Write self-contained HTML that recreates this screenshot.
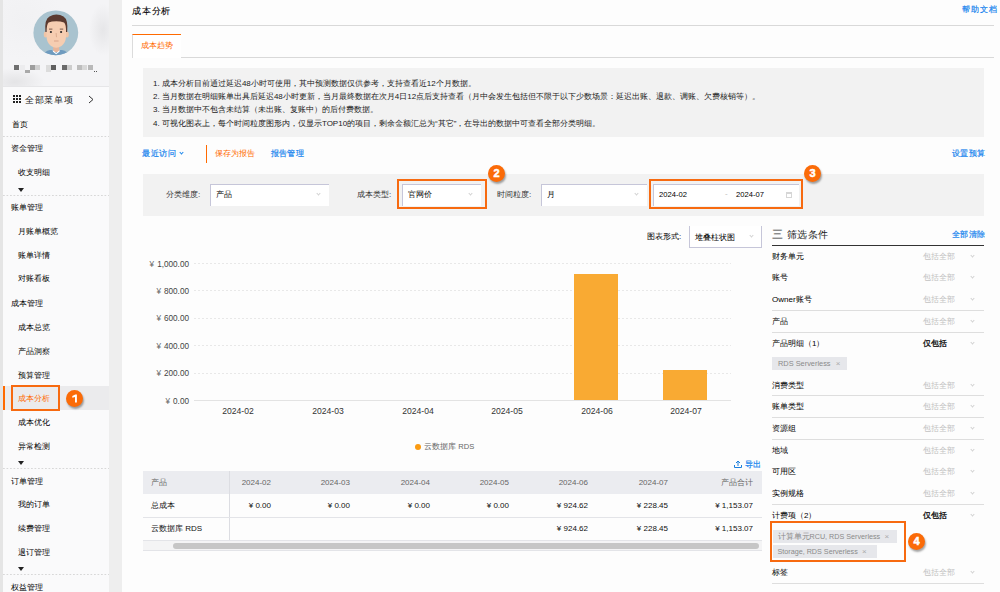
<!DOCTYPE html>
<html><head><meta charset="utf-8">
<style>
*{box-sizing:border-box;margin:0;padding:0}
html,body{width:1000px;height:592px;overflow:hidden;background:#fdfdfd;font-family:"Liberation Sans",sans-serif;color:#333}
.a{position:absolute;white-space:nowrap}
svg{display:block}
.t8{font-size:8px;line-height:10px;color:#000}
.blue{color:#1784ee;-webkit-text-stroke:.2px #1784ee}
.org{color:#ff6a00;-webkit-text-stroke:0 transparent !important}
.side{position:absolute;left:3px;top:0;width:106px;height:592px;background:#fafafb}
.sidehead{position:absolute;left:3px;top:0;width:106px;height:86px;background:radial-gradient(ellipse 14px 26px at 100px 30px,#e6e6e8,rgba(240,240,242,0)),radial-gradient(ellipse 30px 14px at 12px 82px,#e4e4e6,rgba(240,240,242,0)),radial-gradient(ellipse 40px 40px at 20px 20px,#f1f1f3,rgba(240,240,242,0)),#f4f4f6}
.strip{position:absolute;left:109px;top:0;width:13px;height:592px;background:#eeeeee}
.lstrip{position:absolute;left:0;top:0;width:3px;height:592px;background:#e5e5e5}
.dash{position:absolute;left:3px;width:106px;height:1px;background:linear-gradient(90deg,#d8d8d8 0 2px,transparent 2px 3.5px);background-size:3.5px 1px}
.tri{position:absolute;width:0;height:0;border-left:3.5px solid transparent;border-right:3.5px solid transparent;border-top:4px solid #222}
.badge{position:absolute;width:17px;height:17px;border-radius:50%;background:#fb6b08;color:#fff;font-weight:bold;font-size:11px;line-height:17px;text-align:center;box-shadow:1px 2px 2px rgba(0,0,0,.35);-webkit-text-stroke:.5px #fff}
.hl{position:absolute;border:2px solid #f76a10}
.sel{position:absolute;background:#fff;border-top:1px solid #c6c6d9;border-left:1px solid #c6c6d9}
.chev{position:absolute;width:3px;height:3px;border-right:1px solid #d2d2d2;border-bottom:1px solid #d2d2d2;transform:rotate(45deg)}
.grid{position:absolute;left:194px;width:537px;height:1px;background:linear-gradient(90deg,#e8e8e8 0 2px,transparent 2px 4px);background-size:4px 1px}
.ylab{position:absolute;width:60px;left:129px;text-align:right;font-size:8.2px;line-height:10px;color:#444}
.ylab i{font-style:normal;color:#666;margin-right:3px}
.xlab{position:absolute;width:60px;text-align:center;font-size:8.6px;line-height:10px;color:#333}
.bar{position:absolute;background:#f9aa33}
.frow{position:absolute;left:772px;font-size:8px;line-height:10px;color:#000}
.fval{position:absolute;left:923px;font-size:8px;line-height:10px;color:#c2c2c2}
.fline{position:absolute;left:772px;width:212px;height:1px;background:#dedede}
.tag{position:absolute;white-space:nowrap;overflow:hidden;background:#e6e7eb;color:#8a8a8a;font-size:8px;line-height:13px;height:13px;padding-left:5px}
.th{position:absolute;font-size:8px;line-height:10px;color:#666}
.td{position:absolute;font-size:8px;line-height:10px;color:#111}
</style></head><body>

<!-- sidebar -->
<div class="lstrip"></div>
<div class="side"></div>
<div class="sidehead"></div>
<div class="strip"></div>
<div style="position:absolute;left:3px;top:86px;width:106px;height:1px;background:#e6e6e8"></div>

<!-- avatar -->
<svg class="a" style="left:33px;top:10px" width="46" height="46" viewBox="0 0 46 46">
<defs><clipPath id="cc"><circle cx="22.8" cy="22.8" r="22.4"/></clipPath></defs>
<circle cx="22.8" cy="22.8" r="22.4" fill="#a9c3cf"/>
<g clip-path="url(#cc)">
<path d="M9 48 Q10 41.5 17 40 L29 40 Q36 41.5 37 48 Z" fill="#6f9bbf"/>
<rect x="20.2" y="34" width="6" height="8" fill="#e8b59a"/>
<path d="M19.6 40 L23.2 43 L26.8 40 L26.4 41.8 L23.2 44.2 L20 41.8Z" fill="#fff"/>
<ellipse cx="12.6" cy="24.5" rx="1.8" ry="3" fill="#f0c4a6"/>
<ellipse cx="34" cy="24.5" rx="1.8" ry="3" fill="#f0c4a6"/>
<path d="M13.5 11 L13.5 27 Q14 33 18 36 Q20.5 37.8 23.3 37.8 Q26 37.8 28.5 36 Q32.5 33 33 27 L33 11 Z" fill="#f6cdb1"/>
<path d="M12.4 22 Q11.3 9 16.5 6.4 Q20 4.6 23.3 4.6 Q27.5 4.6 30.5 6.6 Q35.3 9.5 34.2 22 L33 22 Q33.2 14.5 31 12.6 Q27.5 11.3 23.3 11.3 Q18.5 11.3 15.6 12.6 Q13.6 14.5 13.6 22 Z" fill="#5b3a30"/>
<rect x="16" y="18.6" width="3.4" height="1" fill="#7a5a4c"/>
<rect x="26.8" y="18.6" width="3.4" height="1" fill="#7a5a4c"/>
<circle cx="17.9" cy="22" r="1.1" fill="#2e2a2a"/>
<circle cx="28.1" cy="22" r="1.1" fill="#2e2a2a"/>
<path d="M23.1 23 L23.5 27.2" stroke="#d29f84" stroke-width=".7" fill="none"/>
<rect x="21" y="30.6" width="4.6" height=".8" fill="#d49a80"/>
</g></svg>

<!-- pixelated name -->
<div class="a" style="left:14px;top:65px;width:5px;height:5px;background:#6f6f6f"></div>
<div class="a" style="left:20px;top:65px;width:5px;height:5px;background:#ececee"></div>
<div class="a" style="left:25px;top:70px;width:5px;height:3px;background:#a9a9a9"></div>
<div class="a" style="left:30px;top:65px;width:5px;height:5px;background:#9d9d9d"></div>
<div class="a" style="left:35px;top:65px;width:5px;height:5px;background:#cfcfcf"></div>
<div class="a" style="left:46px;top:65px;width:5px;height:7px;background:#dcdcdc"></div>
<div class="a" style="left:51px;top:65px;width:5px;height:5px;background:#5f5f5f"></div>
<div class="a" style="left:62px;top:65px;width:5px;height:5px;background:#6a6a6a"></div>
<div class="a" style="left:67px;top:65px;width:5px;height:5px;background:#cdcdcd"></div>
<div class="a" style="left:77px;top:65px;width:5px;height:5px;background:#bdbdbd"></div>
<div class="a" style="left:82px;top:65px;width:5px;height:5px;background:#d8d8d8"></div>
<div class="a" style="left:88px;top:65px;width:5px;height:5px;background:#b9b9b9"></div>
<div class="a" style="left:94px;top:71px;width:1px;height:1px;background:#555"></div><div class="a" style="left:96px;top:71px;width:1px;height:1px;background:#555"></div>

<!-- menu -->
<div class="a" style="left:13px;top:95px;width:8px;height:8px">
<svg width="8" height="8" viewBox="0 0 8 8" fill="#222"><rect x="0" y="0" width="2" height="2"/><rect x="3" y="0" width="2" height="2"/><rect x="6" y="0" width="2" height="2"/><rect x="0" y="3" width="2" height="2"/><rect x="3" y="3" width="2" height="2"/><rect x="6" y="3" width="2" height="2"/><rect x="0" y="6" width="2" height="2"/><rect x="3" y="6" width="2" height="2"/><rect x="6" y="6" width="2" height="2"/></svg></div>
<div class="a" style="left:25px;top:93.8px;letter-spacing:.7px;font-size:9px;line-height:12px;color:#222">全部菜单项</div>
<svg class="a" style="left:88px;top:95px" width="6" height="9" viewBox="0 0 6 9"><path d="M1 1 L5 4.5 L1 8" stroke="#333" stroke-width="1" fill="none"/></svg>

<div class="a t8" style="left:12px;top:120px">首页</div>
<div class="dash" style="top:136px"></div>
<div class="a t8" style="left:11px;top:144px">资金管理</div>
<div class="a t8" style="left:18px;top:168px">收支明细</div>
<div class="tri" style="left:18px;top:188px"></div>
<div class="dash" style="top:195px"></div>
<div class="a t8" style="left:11px;top:203px">账单管理</div>
<div class="a t8" style="left:18px;top:227px">月账单概览</div>
<div class="a t8" style="left:18px;top:251px">账单详情</div>
<div class="a t8" style="left:18px;top:274px">对账看板</div>
<div class="a t8" style="left:11px;top:298.5px">成本管理</div>
<div class="a t8" style="left:18px;top:322.5px">成本总览</div>
<div class="a t8" style="left:18px;top:347px">产品洞察</div>
<div class="a t8" style="left:18px;top:370.5px">预算管理</div>
<div class="a" style="left:3px;top:386px;width:106px;height:24px;background:#ebebed"></div>
<div class="a" style="left:3px;top:386px;width:1.5px;height:24px;background:#ff6a00"></div>
<div class="a t8 org" style="left:18px;top:394px">成本分析</div>
<div class="hl" style="left:11px;top:385px;width:49px;height:26px"></div>
<div class="badge" style="left:66px;top:390px"><svg width="17" height="17" viewBox="0 0 17 17"><path d="M6.3 5.9 L9.3 4.5 L10.9 4.5 L10.9 12.5 L9.0 12.5 L9.0 7.0 L6.3 7.8 Z" fill="#fff"/></svg></div>
<div class="a t8" style="left:18px;top:418px">成本优化</div>
<div class="a t8" style="left:18px;top:442px">异常检测</div>
<div class="tri" style="left:18px;top:461px"></div>
<div class="dash" style="top:468px"></div>
<div class="a t8" style="left:11px;top:477px">订单管理</div>
<div class="a t8" style="left:18px;top:500px">我的订单</div>
<div class="a t8" style="left:18px;top:524px">续费管理</div>
<div class="a t8" style="left:18px;top:547.5px">退订管理</div>
<div class="tri" style="left:18px;top:567px"></div>
<div class="dash" style="top:574px"></div>
<div class="a t8" style="left:11px;top:583px">权益管理</div>

<!-- main header -->
<div class="a" style="left:132px;top:5px;font-size:9px;letter-spacing:.8px;line-height:12px;color:#000;font-weight:normal;-webkit-text-stroke:.1px #000">成本分析</div>
<div class="a t8 blue" style="left:961.5px;top:4.5px;letter-spacing:1px">帮助文档</div>
<div class="a" style="left:132px;top:25px;width:862px;height:1px;background:#d9d9d9"></div>
<!-- tab -->
<div class="a" style="left:132px;top:34px;width:49px;height:24px;background:#fff;border-left:1px solid #dcdcdc;border-top:1.5px solid #ff6a00"></div>
<div class="a t8 org" style="left:141px;top:41px">成本趋势</div>
<div class="a" style="left:181px;top:57px;width:813px;height:1px;background:#d9d9d9"></div>
<!-- info box -->
<div class="a" style="left:143px;top:68px;width:841px;height:69px;background:#f2f2f2"></div>
<div class="a" style="left:153px;top:77px;font-size:8px;line-height:13.2px;color:#1a1a1a">1. 成本分析目前通过延迟48小时可使用，其中预测数据仅供参考，支持查看近12个月数据。<br>2. 当月数据在明细账单出具后延迟48小时更新，当月最终数据在次月4日12点后支持查看（月中会发生包括但不限于以下少数场景：延迟出账、退款、调账、欠费核销等）。<br>3. 当月数据中不包含未结算（未出账、复账中）的后付费数据。<br>4. 可视化图表上，每个时间粒度图形内，仅显示TOP10的项目，剩余金额汇总为“其它”，在导出的数据中可查看全部分类明细。</div>

<!-- toolbar -->
<div class="a t8 blue" style="left:142px;top:149px;letter-spacing:.6px">最近访问</div>
<div class="chev" style="left:180px;top:151px;width:3px;height:3px;border-color:#1b87ec"></div>
<div class="a" style="left:206px;top:145px;width:1px;height:18px;background:#ff6a00"></div>
<div class="a t8 org" style="left:215px;top:149px">保存为报告</div>
<div class="a t8 blue" style="left:270.5px;top:149px;letter-spacing:.4px">报告管理</div>
<div class="a t8 blue" style="left:951.5px;top:149px;letter-spacing:.5px">设置预算</div>

<!-- filter bar -->
<div class="a" style="left:143px;top:174px;width:841px;height:42px;background:#f2f2f2"></div>
<div class="a t8" style="left:166px;top:190px;color:#333">分类维度:</div>
<div class="sel" style="left:210px;top:184px;width:119px;height:22px"></div>
<div class="a t8" style="left:216px;top:190px">产品</div>
<div class="chev" style="left:317px;top:192px"></div>
<div class="a t8" style="left:357px;top:190px;color:#333">成本类型:</div>
<div class="sel" style="left:402px;top:184px;width:79px;height:22px"></div>
<div class="a t8" style="left:408px;top:190px">官网价</div>
<div class="chev" style="left:469px;top:192px"></div>
<div class="hl" style="left:397px;top:179px;width:90px;height:30px;border-width:2.5px"></div>
<div class="badge" style="left:488px;top:165px">2</div>
<div class="a t8" style="left:497px;top:190px;color:#333">时间粒度:</div>
<div class="sel" style="left:541px;top:184px;width:106px;height:22px"></div>
<div class="a t8" style="left:547px;top:190px">月</div>
<div class="chev" style="left:635px;top:192px"></div>
<div class="sel" style="left:653px;top:184px;width:146px;height:22px"></div>
<div class="a t8" style="left:659px;top:190px;font-size:7.6px">2024-02</div>
<div class="a t8" style="left:725px;top:189px;color:#bbb">-</div>
<div class="a t8" style="left:736px;top:190px;font-size:7.6px">2024-07</div>
<div class="a" style="left:786px;top:192px;width:6px;height:6px;border:1px solid #d6d6d6;border-top-width:2px"></div>
<div class="hl" style="left:649px;top:179px;width:154px;height:30px;border-width:2.5px"></div>
<div class="badge" style="left:804px;top:165px">3</div>

<!-- chart type -->
<div class="a t8" style="left:647px;top:232px">图表形式:</div>
<div class="sel" style="left:689px;top:226px;width:73px;height:22px;border-top:none;border-right:1px solid #c6c6d9;border-bottom:1px solid #c6c6d9"></div>
<div class="a t8" style="left:695px;top:232.5px">堆叠柱状图</div>
<div class="chev" style="left:750px;top:234px"></div>

<!-- chart -->
<div class="grid" style="top:263px"></div>
<div class="grid" style="top:290px"></div>
<div class="grid" style="top:318px"></div>
<div class="grid" style="top:345px"></div>
<div class="grid" style="top:373px"></div>
<div class="a" style="left:194px;top:400px;width:537px;height:1px;background:#e3e3e3"></div>
<div class="ylab" style="top:259.5px"><i>¥</i>1,000.00</div>
<div class="ylab" style="top:286.5px"><i>¥</i>800.00</div>
<div class="ylab" style="top:314px"><i>¥</i>600.00</div>
<div class="ylab" style="top:341.5px"><i>¥</i>400.00</div>
<div class="ylab" style="top:369px"><i>¥</i>200.00</div>
<div class="ylab" style="top:396.5px"><i>¥</i>0.00</div>
<div class="xlab" style="left:208px;top:406px">2024-02</div>
<div class="xlab" style="left:298px;top:406px">2024-03</div>
<div class="xlab" style="left:388px;top:406px">2024-04</div>
<div class="xlab" style="left:477px;top:406px">2024-05</div>
<div class="xlab" style="left:567px;top:406px">2024-06</div>
<div class="xlab" style="left:656px;top:406px">2024-07</div>
<div class="bar" style="left:574px;top:274px;width:44px;height:126px"></div>
<div class="bar" style="left:663px;top:370px;width:44px;height:30px"></div>
<div class="a" style="left:415px;top:443.5px;width:6px;height:6px;border-radius:50%;background:#fb9b12"></div>
<div class="a" style="left:424px;top:441.5px;font-size:8px;line-height:10px;color:#666">云数据库 <span style="font-size:7.6px">RDS</span></div>

<!-- export -->
<svg class="a" style="left:734px;top:460px" width="8" height="8" viewBox="0 0 8 8"><path d="M4 6 V1 M2 3 L4 1 L6 3 M.5 5 V7.5 H7.5 V5" stroke="#1d7fdc" stroke-width="1" fill="none"/></svg>
<div class="a t8 blue" style="left:745px;top:459.5px">导出</div>

<!-- table -->
<div class="a" style="left:143px;top:471px;width:619px;height:23px;background:#ebecf0"></div>
<div class="a" style="left:229px;top:471px;width:1px;height:69px;background:#dcdde2"></div>
<div class="a" style="left:143px;top:517px;width:619px;height:1px;background:#e3e4e8"></div>
<div class="a" style="left:143px;top:540px;width:619px;height:1px;background:#e3e4e8"></div>
<div class="a" style="left:143px;top:541px;width:619px;height:9px;background:#f4f4f5"></div>
<div class="a" style="left:173px;top:543px;width:586px;height:6px;border-radius:3px;background:#c6c6c6"></div>
<div class="a" style="left:143px;top:550px;width:619px;height:1px;background:#e3e4e8"></div>
<div class="th" style="left:151px;top:478px">产品</div>
<div class="th" style="left:211px;top:478px;width:60px;text-align:right">2024-02</div>
<div class="th" style="left:290px;top:478px;width:60px;text-align:right">2024-03</div>
<div class="th" style="left:370px;top:478px;width:60px;text-align:right">2024-04</div>
<div class="th" style="left:449px;top:478px;width:60px;text-align:right">2024-05</div>
<div class="th" style="left:528px;top:478px;width:60px;text-align:right">2024-06</div>
<div class="th" style="left:608px;top:478px;width:60px;text-align:right">2024-07</div>
<div class="th" style="left:693px;top:478px;width:60px;text-align:right">产品合计</div>
<div class="td" style="left:151px;top:500.5px">总成本</div>
<div class="td" style="left:211px;top:500.5px;width:60px;text-align:right">¥ 0.00</div>
<div class="td" style="left:290px;top:500.5px;width:60px;text-align:right">¥ 0.00</div>
<div class="td" style="left:370px;top:500.5px;width:60px;text-align:right">¥ 0.00</div>
<div class="td" style="left:449px;top:500.5px;width:60px;text-align:right">¥ 0.00</div>
<div class="td" style="left:528px;top:500.5px;width:60px;text-align:right">¥ 924.62</div>
<div class="td" style="left:608px;top:500.5px;width:60px;text-align:right">¥ 228.45</div>
<div class="td" style="left:693px;top:500.5px;width:60px;text-align:right">¥ 1,153.07</div>
<div class="td" style="left:151px;top:524px">云数据库 RDS</div>
<div class="td" style="left:528px;top:524px;width:60px;text-align:right">¥ 924.62</div>
<div class="td" style="left:608px;top:524px;width:60px;text-align:right">¥ 228.45</div>
<div class="td" style="left:693px;top:524px;width:60px;text-align:right">¥ 1,153.07</div>

<!-- filter panel -->
<div class="a" style="left:772px;top:228px;font-size:11px;line-height:13px;color:#333">三</div>
<div class="a" style="left:786.5px;top:228px;letter-spacing:.5px;font-size:10px;line-height:13px;color:#222">筛选条件</div>
<div class="a t8 blue" style="left:951.5px;top:230px;letter-spacing:.5px">全部清除</div>
<div class="a" style="left:772px;top:245px;width:212px;height:1px;background:#333"></div>

<div class="frow" style="top:252px">财务单元</div><div class="fval" style="top:252px">包括全部</div>
<div class="frow" style="top:273px">账号</div><div class="fval" style="top:273px">包括全部</div>
<div class="frow" style="top:295px">Owner账号</div><div class="fval" style="top:295px">包括全部</div>
<div class="fline" style="top:310px"></div>
<div class="frow" style="top:317px">产品</div><div class="fval" style="top:317px">包括全部</div>
<div class="fline" style="top:332px"></div>
<div class="frow" style="top:339px">产品明细（1）</div><div class="fval" style="top:339px;color:#111;-webkit-text-stroke:.3px #111">仅包括</div>
<div class="tag" style="left:772px;top:357px;width:75px;padding-left:6px"><span style="font-size:7.4px">RDS Serverless</span> <span style="color:#aaa;margin-left:3px">×</span></div>
<div class="frow" style="top:381px">消费类型</div><div class="fval" style="top:381px">包括全部</div>
<div class="fline" style="top:395px"></div>
<div class="frow" style="top:402px">账单类型</div><div class="fval" style="top:402px">包括全部</div>
<div class="fline" style="top:417px"></div>
<div class="frow" style="top:424px">资源组</div><div class="fval" style="top:424px">包括全部</div>
<div class="fline" style="top:439px"></div>
<div class="frow" style="top:446px">地域</div><div class="fval" style="top:446px">包括全部</div>
<div class="frow" style="top:467px">可用区</div><div class="fval" style="top:467px">包括全部</div>
<div class="frow" style="top:489px">实例规格</div><div class="fval" style="top:489px">包括全部</div>
<div class="fline" style="top:504px"></div>
<div class="frow" style="top:511px">计费项（2）</div><div class="fval" style="top:511px;color:#111;-webkit-text-stroke:.3px #111">仅包括</div>
<div class="tag" style="left:772.5px;top:529.5px;width:124.5px">计算单元<span style="font-size:7.2px">RCU, RDS Serverless</span> <span style="color:#aaa;margin-left:2px">×</span></div>
<div class="tag" style="left:772.5px;top:545px;width:104px"><span style="font-size:7.2px">Storage, RDS Serverless</span> <span style="color:#aaa;margin-left:2px">×</span></div>
<div class="hl" style="left:770px;top:521px;width:136px;height:41px;border-width:2.5px"></div>
<div class="badge" style="left:908px;top:533px">4</div>
<div class="frow" style="top:568px">标签</div><div class="fval" style="top:568px">包括全部</div>
<div class="fline" style="top:583px"></div>
<div class="chev" style="left:971px;top:254px"></div>
<div class="chev" style="left:971px;top:275px"></div>
<div class="chev" style="left:971px;top:297px"></div>
<div class="chev" style="left:971px;top:319px"></div>
<div class="chev" style="left:971px;top:341px"></div>
<div class="chev" style="left:971px;top:383px"></div>
<div class="chev" style="left:971px;top:404px"></div>
<div class="chev" style="left:971px;top:426px"></div>
<div class="chev" style="left:971px;top:448px"></div>
<div class="chev" style="left:971px;top:469px"></div>
<div class="chev" style="left:971px;top:491px"></div>
<div class="chev" style="left:971px;top:513px"></div>
<div class="chev" style="left:971px;top:570px"></div>

</body></html>
